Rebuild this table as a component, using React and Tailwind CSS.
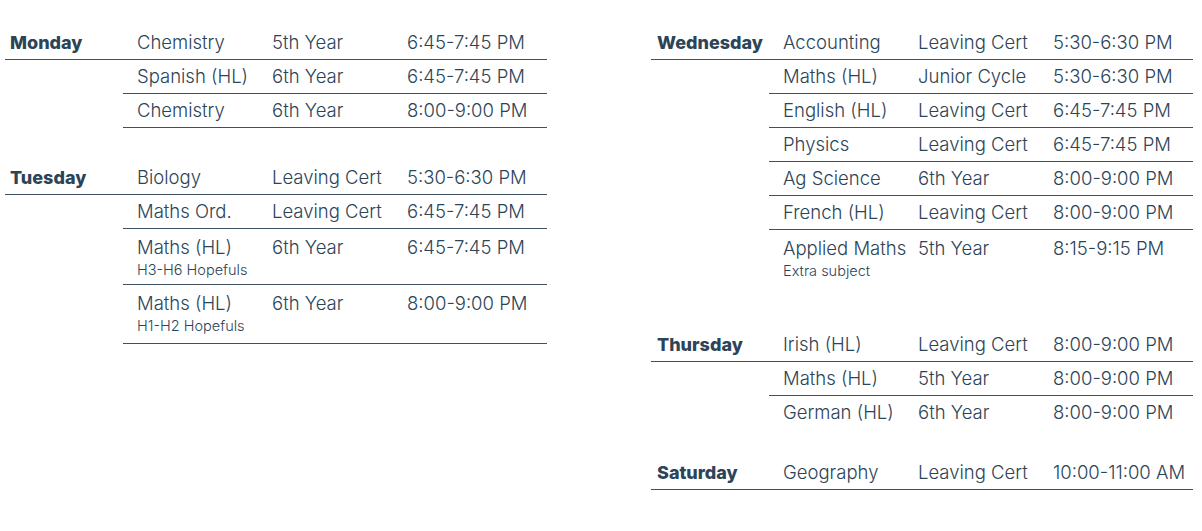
import React from "react";

const left = [
  {
    day: "Monday",
    rows: [
      { subject: "Chemistry", year: "5th Year", time: "6:45-7:45 PM" },
      { subject: "Spanish (HL)", year: "6th Year", time: "6:45-7:45 PM" },
      { subject: "Chemistry", year: "6th Year", time: "8:00-9:00 PM" },
    ],
  },
  {
    day: "Tuesday",
    gap: "mt-[33px]",
    rows: [
      { subject: "Biology", year: "Leaving Cert", time: "5:30-6:30 PM" },
      { subject: "Maths Ord.", year: "Leaving Cert", time: "6:45-7:45 PM" },
      { subject: "Maths (HL)", note: "H3-H6 Hopefuls", year: "6th Year", time: "6:45-7:45 PM" },
      { subject: "Maths (HL)", note: "H1-H2 Hopefuls", year: "6th Year", time: "8:00-9:00 PM", pb: "pb-[9px]" },
    ],
  },
];

const right = [
  {
    day: "Wednesday",
    rows: [
      { subject: "Accounting", year: "Leaving Cert", time: "5:30-6:30 PM" },
      { subject: "Maths (HL)", year: "Junior Cycle", time: "5:30-6:30 PM" },
      { subject: "English (HL)", year: "Leaving Cert", time: "6:45-7:45 PM" },
      { subject: "Physics", year: "Leaving Cert", time: "6:45-7:45 PM" },
      { subject: "Ag Science", year: "6th Year", time: "8:00-9:00 PM" },
      { subject: "French (HL)", year: "Leaving Cert", time: "8:00-9:00 PM" },
      { subject: "Applied Maths", note: "Extra subject", year: "5th Year", time: "8:15-9:15 PM", noLine: true, pb: "pb-[10px]" },
    ],
  },
  {
    day: "Thursday",
    gap: "mt-[39px]",
    rows: [
      { subject: "Irish (HL)", year: "Leaving Cert", time: "8:00-9:00 PM" },
      { subject: "Maths (HL)", year: "5th Year", time: "8:00-9:00 PM" },
      { subject: "German (HL)", year: "6th Year", time: "8:00-9:00 PM", noLine: true },
    ],
  },
  {
    day: "Saturday",
    gap: "mt-[27px]",
    rows: [{ subject: "Geography", year: "Leaving Cert", time: "10:00-11:00 AM" }],
  },
];

function Cells({ row }) {
  if (row.note) {
    return (
      <div className={`flex pl-[14px] pt-[8px] ${row.pb || "pb-[6px]"}`}>
        <div className="w-[135px] shrink-0">
          <div className="leading-[20px] whitespace-nowrap">{row.subject}</div>
          <div className="mt-[5px] text-[14.5px] leading-[16px] whitespace-nowrap">{row.note}</div>
        </div>
        <div className="w-[135px] shrink-0 leading-[20px] whitespace-nowrap">{row.year}</div>
        <div className="leading-[20px] whitespace-nowrap">{row.time}</div>
      </div>
    );
  }
  return (
    <div className="flex h-[33px] items-center pl-[14px]">
      <div className="w-[135px] shrink-0 whitespace-nowrap">{row.subject}</div>
      <div className="w-[135px] shrink-0 whitespace-nowrap">{row.year}</div>
      <div className="whitespace-nowrap">{row.time}</div>
    </div>
  );
}

function Section({ section, pad }) {
  return (
    <div className={section.gap || ""}>
      {section.rows.map((row, i) =>
        i === 0 ? (
          <div key={i} className={`flex ${row.noLine ? "" : "border-b border-[#3d5163]"}`}>
            <div className={`w-[118px] shrink-0 ${pad} h-[33px] flex items-center font-extrabold text-[18px]`}>
              {section.day}
            </div>
            <div className="flex-1">
              <Cells row={row} />
            </div>
          </div>
        ) : (
          <div key={i} className={`ml-[118px] ${row.noLine ? "" : "border-b border-[#3d5163]"}`}>
            <Cells row={row} />
          </div>
        )
      )}
    </div>
  );
}

export default function App() {
  return (
    <div
      className="w-[1202px] h-[531px] bg-white text-[#2c4457] text-[18.5px] font-light flex pt-[26px] pl-[5px]"
      style={{ fontFamily: "Inter, 'Noto Sans', sans-serif" }}
    >
      <div className="w-[542px] flex flex-col">
        {left.map((s) => (
          <Section key={s.day} section={s} pad="pl-[5px]" />
        ))}
      </div>
      <div className="w-[542px] ml-[104px] flex flex-col">
        {right.map((s) => (
          <Section key={s.day} section={s} pad="pl-[6px]" />
        ))}
      </div>
    </div>
  );
}
